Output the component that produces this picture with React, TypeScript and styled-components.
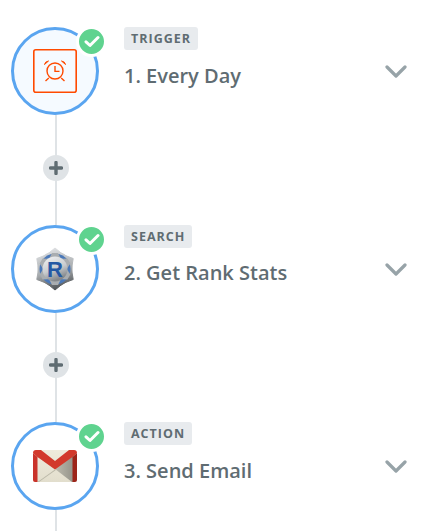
import * as React from "react"
import styled, { createGlobalStyle } from "styled-components"

const Global = createGlobalStyle`
  html, body {
    margin: 0;
    padding: 0;
    background: #fff;
    overflow: hidden;
  }
`

const Page = styled.div`
  width: 424px;
  height: 531px;
  overflow: hidden;
  padding: 27px 17px 0 11px;
  box-sizing: border-box;
  font-family: "Open Sans", "Liberation Sans", sans-serif;
`

const Step = styled.div`
  display: grid;
  grid-template-columns: 88px 1fr 22px;
  column-gap: 25px;
  height: 197.5px;
`

const Left = styled.div`
  display: flex;
  flex-direction: column;
  align-items: center;
`

const Circle = styled.div<{ $active?: boolean }>`
  position: relative;
  flex: none;
  width: 88px;
  height: 88px;
  box-sizing: border-box;
  border: 3px solid #5aa5f0;
  border-radius: 50%;
  background: ${p => (p.$active ? "#f5faff" : "#fff")};
  display: flex;
  align-items: center;
  justify-content: center;
`

const Check = styled.div`
  position: absolute;
  top: -4px;
  right: -11px;
  width: 25px;
  height: 25px;
  border-radius: 50%;
  background: #5fd38f;
  border: 3px solid #fff;
  display: flex;
  align-items: center;
  justify-content: center;
`

const Connector = styled.div`
  flex: 1;
  width: 2px;
  margin-left: 2px;
  background: #dfe3e6;
  display: flex;
  align-items: center;
  justify-content: center;
  padding-bottom: 4px;
`

const PlusButton = styled.div`
  flex: none;
  width: 26px;
  height: 26px;
  border-radius: 50%;
  background: #dfe3e6;
  display: flex;
  align-items: center;
  justify-content: center;
`

const Info = styled.div`
  display: flex;
  flex-direction: column;
  align-items: flex-start;
`

const Tag = styled.div`
  height: 23px;
  line-height: 23px;
  padding: 0 7px;
  border-radius: 3px;
  background: #e8ebee;
  color: #5f6c72;
  font-size: 12.5px;
  font-weight: 700;
  letter-spacing: 1px;
`

const Title = styled.div`
  margin-top: 10.5px;
  color: #5f6c72;
  font-size: 20px;
  line-height: 30px;
  font-weight: 600;
`

const Toggle = styled.div`
  padding-top: 34px;
`

const CheckIcon = () => (
  <svg width="16" height="13" viewBox="0 0 16 13">
    <path d="M2 6.8 L6 10.5 L14 2.5" fill="none" stroke="#fff" strokeWidth="3" strokeLinecap="round" strokeLinejoin="round" />
  </svg>
)

const PlusIcon = () => (
  <svg width="14" height="14" viewBox="0 0 14 14">
    <path d="M7 1.5 V12.5 M1.5 7 H12.5" stroke="#5f6c72" strokeWidth="3.4" strokeLinecap="round" />
  </svg>
)

const Chevron = () => (
  <svg width="22" height="13" viewBox="0 0 22 13">
    <path d="M2 2 L11 11 L20 2" fill="none" stroke="#97a3a8" strokeWidth="3.2" strokeLinecap="round" strokeLinejoin="round" />
  </svg>
)

const AlarmIcon = () => (
  <svg width="44" height="44" viewBox="0 0 44 44" fill="none" stroke="#ff4a00">
    <rect x="0.8" y="0.8" width="42.4" height="42.4" rx="2" strokeWidth="1.6" />
    <circle cx="22" cy="22" r="8" strokeWidth="1.4" />
    <path d="M22 17 V22.4 H26.5" strokeWidth="1.4" />
    <path d="M11.5 15.5 Q12 12.5 15.5 12 Z M32.5 15.5 Q32 12.5 28.5 12 Z" fill="#ff4a00" strokeWidth="1" strokeLinejoin="round" />
    <path d="M15.8 29 L12.5 32 M28.2 29 L31.5 32" strokeWidth="1.4" />
  </svg>
)

const spokes = [0, 60, 120, 180, 240, 300]

// six pointed star, tip radius 21, valley radius 16.5
const starPoints = Array.from({ length: 12 }, (_, i) => {
  const r = i % 2 === 0 ? 21 : 16.5
  const a = (i * 30 * Math.PI) / 180
  return `${(22 + r * Math.sin(a)).toFixed(2)},${(22 - r * Math.cos(a)).toFixed(2)}`
}).join(" ")

const RankIcon = () => (
  <svg width="44" height="44" viewBox="0 0 44 44">
    <defs>
      <linearGradient id="steel" gradientUnits="userSpaceOnUse" x1="16" y1="1" x2="26" y2="43">
        <stop offset="0" stopColor="#dfe1e3" />
        <stop offset="0.55" stopColor="#a9adb0" />
        <stop offset="1" stopColor="#4a4e51" />
      </linearGradient>
      <linearGradient id="disc" x1="0" y1="0" x2="0.4" y2="1">
        <stop offset="0" stopColor="#f4f5f6" />
        <stop offset="0.6" stopColor="#c8cbce" />
        <stop offset="1" stopColor="#83878b" />
      </linearGradient>
    </defs>
    <polygon points={starPoints} fill="url(#steel)" stroke="url(#steel)" strokeWidth="1" strokeLinejoin="round" />
    <circle cx="22" cy="22" r="17.5" fill="url(#steel)" />
    <circle cx="22" cy="22" r="15.5" fill="#4a78b8" />
    {spokes.map(a => (
      <path key={a} d="M19 6 H25 L29 14 H15 Z" transform={`rotate(${a} 22 22)`} fill="#a9adb0" />
    ))}
    <circle cx="22" cy="22" r="12.5" fill="url(#disc)" />
    <text
      x="22"
      y="30"
      textAnchor="middle"
      fontFamily="'Liberation Sans', sans-serif"
      fontWeight="700"
      fontSize="22"
      fill="#2458a4"
    >
      R
    </text>
  </svg>
)

const GmailIcon = () => (
  <svg width="44" height="32" viewBox="0 0 44 32">
    <defs>
      <linearGradient id="paper" x1="0" y1="0" x2="0" y2="1">
        <stop offset="0" stopColor="#efebdc" />
        <stop offset="1" stopColor="#e2decd" />
      </linearGradient>
      <linearGradient id="shade" x1="0" y1="0" x2="1" y2="0">
        <stop offset="0" stopColor="#bdbbae" />
        <stop offset="1" stopColor="#95948a" />
      </linearGradient>
    </defs>
    <rect x="2" y="0" width="40" height="32" fill="url(#paper)" />
    <path d="M22 19 L40 6 V32 H39 Z" fill="url(#shade)" />
    <path d="M4.5 32 L22 19.5 L22.6 20.2 L6 32 Z" fill="#bcb9a9" />
    <path d="M0 3 Q0 0 3 0 H8 L22 11 L36 0 H41 Q44 0 44 3 L39.5 7 L22 19.5 L4.5 7 Z" fill="#d2392c" />
    <path d="M0 3 L4.5 7 V32 H2 Q0 32 0 30 Z" fill="#c9332a" />
    <path d="M44 3 L39.5 7 V32 H42 Q44 32 44 30 Z" fill="#9c2419" />
  </svg>
)

const steps = [
  { tag: "TRIGGER", title: "1. Every Day", icon: <AlarmIcon />, active: true },
  { tag: "SEARCH", title: "2. Get Rank Stats", icon: <RankIcon /> },
  { tag: "ACTION", title: "3. Send Email", icon: <GmailIcon /> },
]

const App = () => (
  <Page>
    <Global />
    {steps.map((s, i) => (
      <Step key={s.tag}>
        <Left>
          <Circle $active={s.active}>
            {s.icon}
            <Check>
              <CheckIcon />
            </Check>
          </Circle>
          <Connector>
            {i < steps.length - 1 && (
              <PlusButton>
                <PlusIcon />
              </PlusButton>
            )}
          </Connector>
        </Left>
        <Info>
          <Tag>{s.tag}</Tag>
          <Title>{s.title}</Title>
        </Info>
        <Toggle>
          <Chevron />
        </Toggle>
      </Step>
    ))}
  </Page>
)

export default App
